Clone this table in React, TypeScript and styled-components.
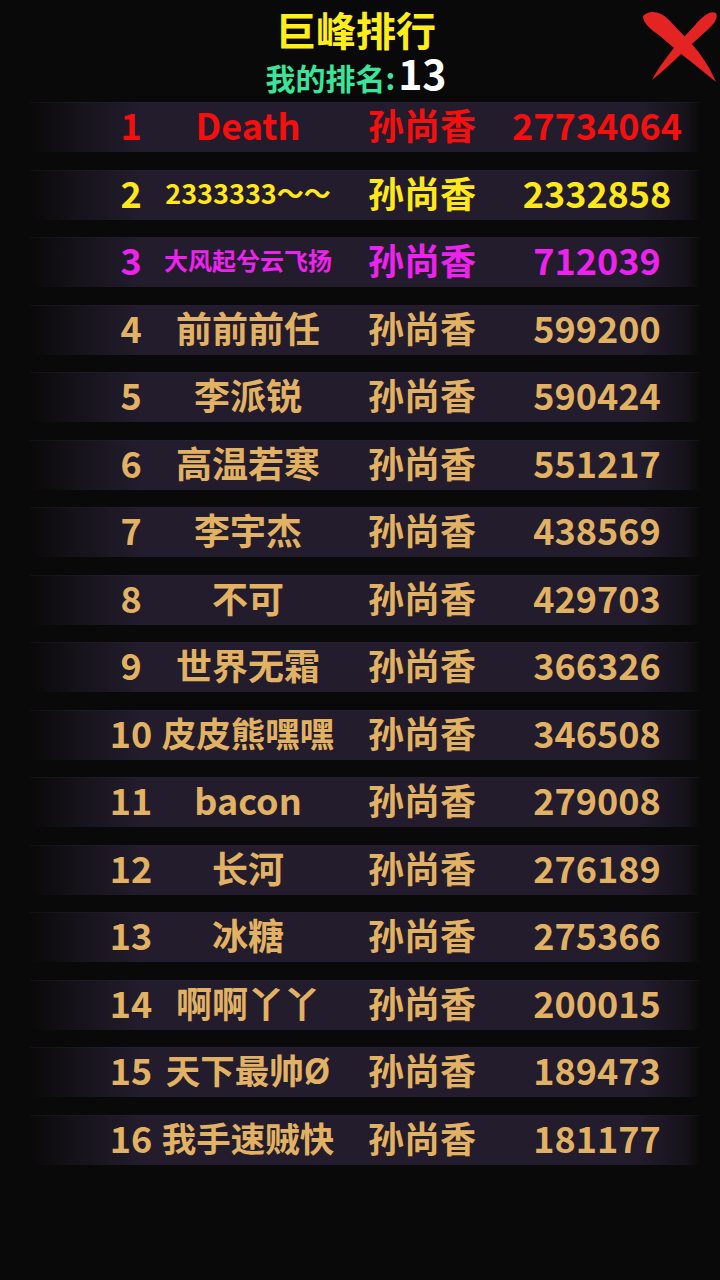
import React from "react";
import styled, { createGlobalStyle } from "styled-components";

const Global = createGlobalStyle`
  html, body { margin: 0; padding: 0; background: #0a0909; }
  body { width: 720px; height: 1280px; overflow: hidden; font-family: "Noto Sans CJK SC", "Noto Sans", sans-serif; }
`;

const Page = styled.div`
  position: relative;
  width: 720px;
  height: 1280px;
  background: #0a0909;
  display: flex;
  flex-direction: column;
  font-family: "Noto Sans CJK SC", "Noto Sans", sans-serif;
  font-weight: 700;
`;

const Header = styled.div`
  height: 96px;
  display: flex;
  flex-direction: column;
  align-items: center;
  padding-right: 8px;
  box-sizing: border-box;
  padding-top: 6px;
`;

const Title = styled.div`
  color: #ffee1a;
  font-size: 40px;
  line-height: 46px;
  height: 46px;
`;

const MyRank = styled.div`
  color: #3ae49a;
  font-size: 30px;
  line-height: 40px;
  height: 40px;
  span {
    color: #ffffff;
    font-size: 41px;
    line-height: 40px;
    margin-left: 3px;
  }
`;

const Close = styled.svg`
  position: absolute;
  right: 0;
  top: 0;
  width: 90px;
  height: 90px;
`;

const List = styled.div`
  display: flex;
  flex-direction: column;
  gap: 17.5px;
  margin-top: 6px;
  width: 670px;
  margin-left: 30px;
`;

const Row = styled.div<{ $c: string }>`
  display: grid;
  grid-template-columns: 72px 58px 176px 172px 178px;
  align-items: center;
  height: 50px;
  background: linear-gradient(
    to right,
    rgba(34, 28, 44, 0) 0px,
    rgba(34, 28, 44, 0.6) 60px,
    #221c2c 110px,
    #221c2c 610px,
    rgba(34, 28, 44, 0.5) 655px,
    rgba(34, 28, 44, 0) 670px
  );
  box-shadow: inset 0 1px 0 rgba(60, 50, 75, 0.18);
  color: ${(p) => p.$c};
`;

const Cell = styled.div<{ $size?: number }>`
  text-align: center;
  white-space: nowrap;
  font-size: ${(p) => p.$size ?? 36}px;
  line-height: 45px;
  height: 45px;
  padding-bottom: 5px;
  display: flex;
  justify-content: center;
`;

const Spacer = styled.div``;

type Entry = { rank: number; name: string; score: string; nameSize?: number };

const data: Entry[] = [
  { rank: 1, name: "Death", score: "27734064" },
  { rank: 2, name: "2333333～～", score: "2332858", nameSize: 27 },
  { rank: 3, name: "大风起兮云飞扬", score: "712039", nameSize: 24 },
  { rank: 4, name: "前前前任", score: "599200" },
  { rank: 5, name: "李派锐", score: "590424" },
  { rank: 6, name: "高温若寒", score: "551217" },
  { rank: 7, name: "李宇杰", score: "438569" },
  { rank: 8, name: "不可", score: "429703" },
  { rank: 9, name: "世界无霜", score: "366326" },
  { rank: 10, name: "皮皮熊嘿嘿", score: "346508", nameSize: 34.5 },
  { rank: 11, name: "bacon", score: "279008" },
  { rank: 12, name: "长河", score: "276189" },
  { rank: 13, name: "冰糖", score: "275366" },
  { rank: 14, name: "啊啊丫丫", score: "200015" },
  { rank: 15, name: "天下最帅Ø", score: "189473", nameSize: 34.5 },
  { rank: 16, name: "我手速贼快", score: "181177", nameSize: 34.5 },
];

const colorFor = (r: number) =>
  r === 1 ? "#f50f0f" : r === 2 ? "#ffe81a" : r === 3 ? "#ee22ee" : "#e2b264";

export default function App() {
  return (
    <Page>
      <Global />
      <Header>
        <Title>巨峰排行</Title>
        <MyRank>
          我的排名:<span>13</span>
        </MyRank>
      </Header>
      <Close viewBox="0 0 90 90">
        <path
          d="M13,16 C20,9 31,12 39,20 L60,42 C72,55 80,68 86,82 C74,72 63,63 51,54 L30,36 C22,30 13,24 13,16 Z"
          fill="#e42323"
        />
        <path
          d="M86,13 C89,19 82,26 74,33 L53,52 C43,62 32,72 22,80 C27,70 36,58 44,48 L66,24 C72,17 80,10 86,13 Z"
          fill="#e42323"
        />
      </Close>
      <List>
        {data.map((d) => (
          <Row key={d.rank} $c={colorFor(d.rank)}>
            <Spacer />
            <Cell>{d.rank}</Cell>
            <Cell $size={d.nameSize}>{d.name}</Cell>
            <Cell>孙尚香</Cell>
            <Cell>{d.score}</Cell>
          </Row>
        ))}
      </List>
    </Page>
  );
}
